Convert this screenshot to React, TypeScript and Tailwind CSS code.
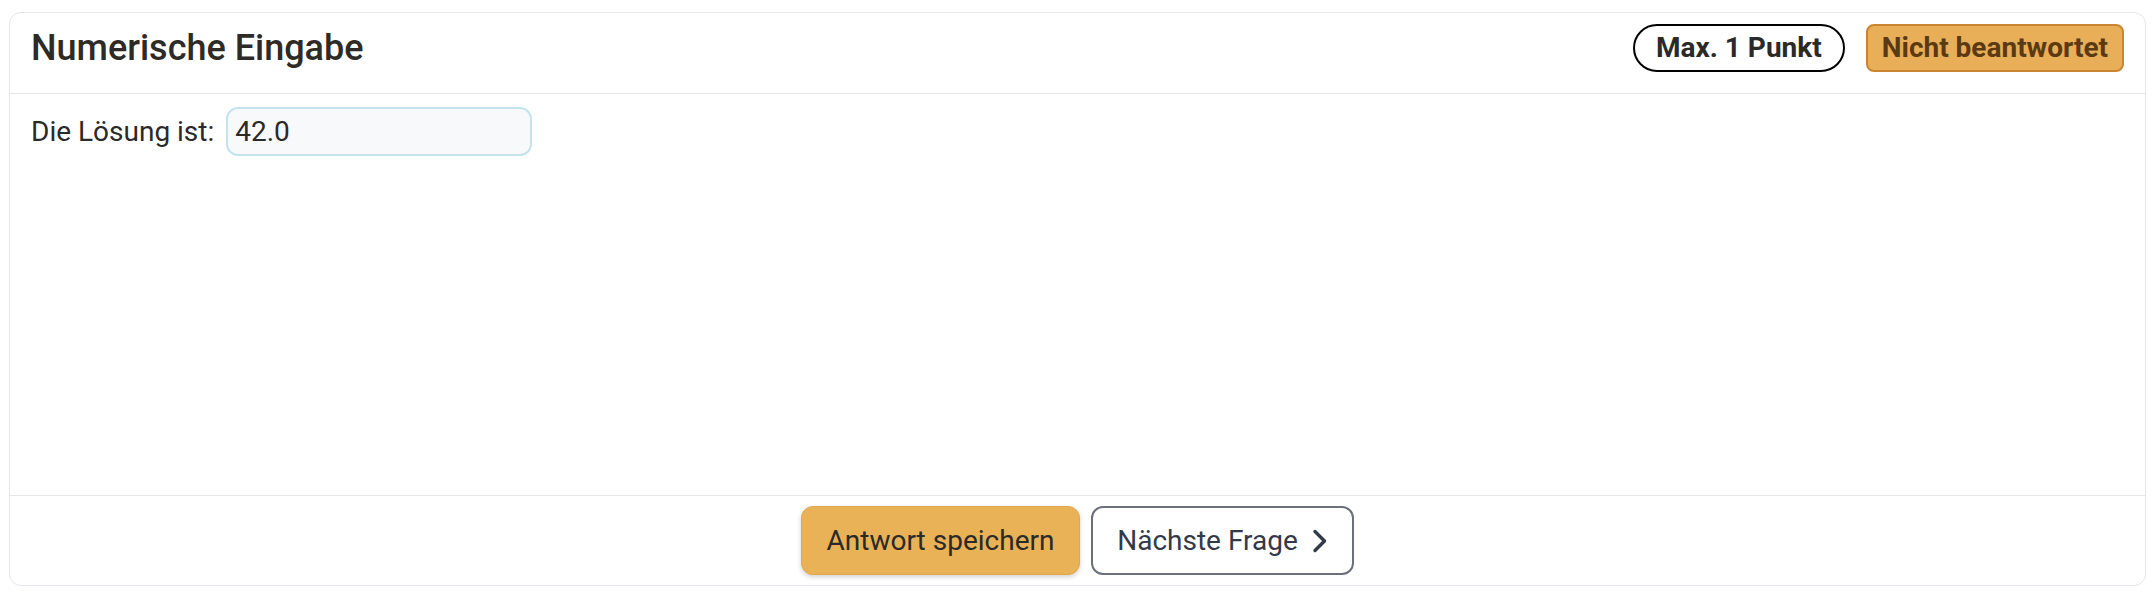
import * as React from "react";

function ChevronRightIcon({ className }: { className?: string }) {
  return (
    <svg
      className={className}
      viewBox="0 0 16 26"
      fill="none"
      stroke="currentColor"
      strokeWidth={3.4}
      strokeLinecap="round"
      strokeLinejoin="round"
    >
      <path d="M3 3.5 12.5 13 3 22.5" />
    </svg>
  );
}

function Badge({ children, tone }: { children: React.ReactNode; tone: "outline" | "warning" }) {
  if (tone === "outline") {
    return (
      <span className="flex h-[48px] items-center rounded-full border-2 border-black bg-white px-[21px] text-[28px] font-bold leading-none text-[#2b2a28]">
        {children}
      </span>
    );
  }
  return (
    <span className="flex h-[48px] items-center rounded-[8px] border-2 border-[#c9852f] bg-[#e9ae58] px-[14px] text-[28px] font-bold leading-none text-[#5b3a12]">
      {children}
    </span>
  );
}

export default function App() {
  const [answer, setAnswer] = React.useState("42.0");

  return (
    <div
      className="min-h-[600px] bg-white pl-[9px] pr-[10px] pt-[12px]"
      style={{ fontFamily: "Roboto, 'Liberation Sans', sans-serif" }}
    >
      <div className="flex flex-col rounded-[12px] border border-[#e6e6ec] bg-white">
        {/* header */}
        <div className="flex items-center justify-between border-b border-[#e6e6ec] px-[21px] pb-[21px] pt-[11px]">
          <h2 className="text-[36px] font-medium leading-none text-[#2e2a25]">Numerische Eingabe</h2>
          <div className="flex items-center gap-[21px]">
            <Badge tone="outline">Max. 1 Punkt</Badge>
            <Badge tone="warning">Nicht beantwortet</Badge>
          </div>
        </div>

        {/* body */}
        <div className="h-[401px] px-[21px] pt-[13px]">
          <label className="flex items-baseline gap-[12px] text-[28px] text-[#2b2a28]">
            <span>Die Lösung ist:</span>
            <input
              type="text"
              value={answer}
              onChange={(e) => setAnswer(e.target.value)}
              className="h-[49px] w-[306px] rounded-[12px] border-2 border-[#c3e4ee] bg-[#f8f9fb] px-[7px] text-[28px] text-[#2b2a28] outline-none"
            />
          </label>
        </div>

        {/* footer */}
        <div className="flex items-center justify-center gap-[11px] border-t border-[#e6e6ec] py-[10px]">
          <button
            type="button"
            className="h-[69px] w-[279px] rounded-[12px] border border-[#e0a84d] bg-[#e9b256] text-[28px] text-[#2b2a28] shadow-[0_2px_5px_rgba(0,0,0,0.18)]"
          >
            Antwort speichern
          </button>
          <button
            type="button"
            className="flex h-[69px] w-[263px] items-center justify-center gap-[14px] rounded-[12px] border-2 border-[#6c707b] bg-white text-[28px] text-[#323a4a]"
          >
            Nächste Frage
            <ChevronRightIcon className="h-[26px] w-[16px]" />
          </button>
        </div>
      </div>
    </div>
  );
}
